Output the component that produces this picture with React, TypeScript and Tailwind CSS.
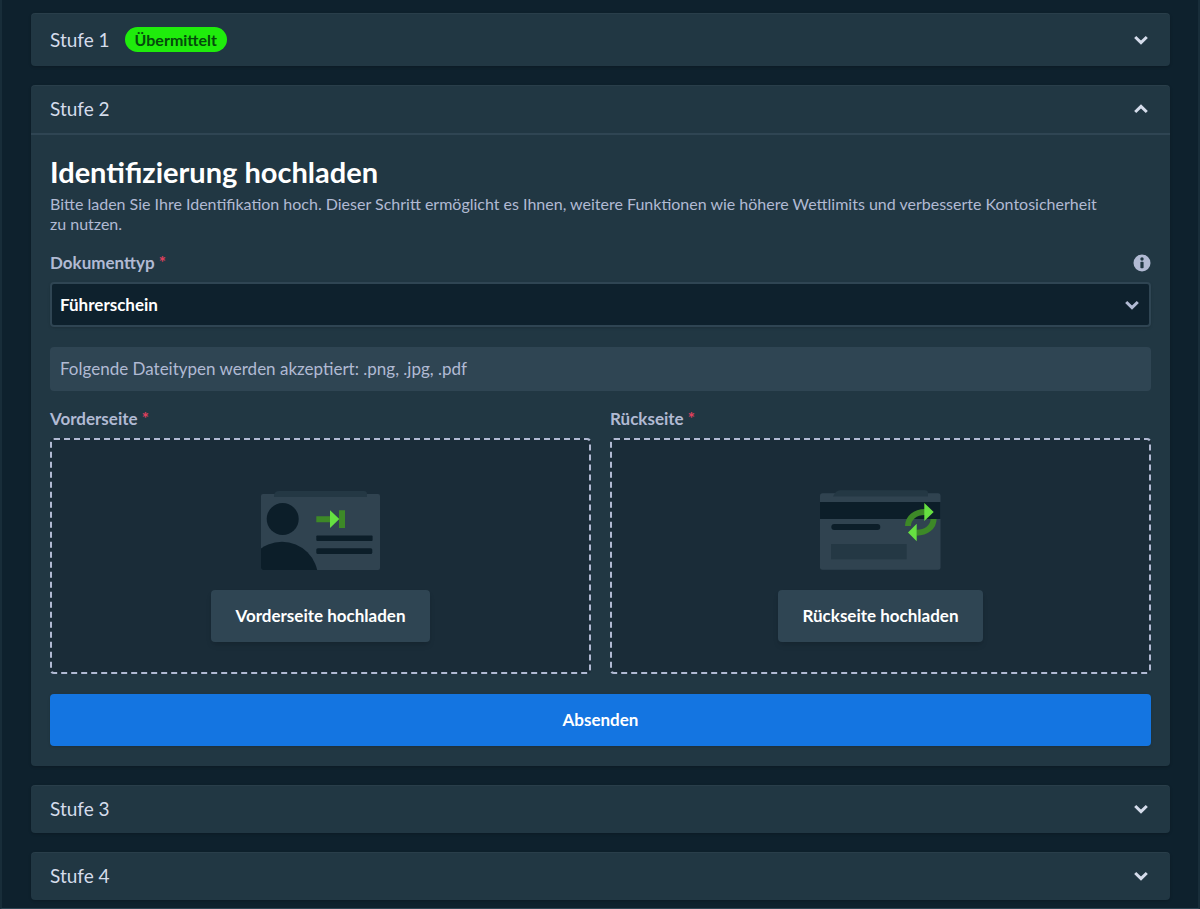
import { useState } from "react";
import type { ReactNode } from "react";

const bodyFont = "font-['Lato','Open_Sans',sans-serif]";

function Chevron({ up = false }: { up?: boolean }) {
  return (
    <svg
      viewBox="0 0 14 10"
      className="h-[10px] w-[14px] shrink-0"
      fill="none"
      stroke="currentColor"
      strokeWidth="3"
      aria-hidden="true"
    >
      <path d={up ? "M1.2 8 7 2.4 12.8 8" : "M1.2 2 7 7.6 12.8 2"} />
    </svg>
  );
}

function InfoIcon() {
  return (
    <svg viewBox="0 0 18 18" className="h-[18px] w-[18px]" aria-hidden="true">
      <circle cx="9" cy="9" r="8.5" fill="#b1bad3" />
      <circle cx="9" cy="5" r="1.7" fill="#213743" />
      <rect x="7.4" y="7.8" width="3.2" height="6.4" rx="0.8" fill="#213743" />
    </svg>
  );
}

// ID card, portrait side
function FrontIllustration() {
  return (
    <svg viewBox="0 0 121 100" className="h-[100px] w-[121px]" aria-hidden="true">
      <defs>
        <clipPath id="front-card">
          <rect x="1" y="24" width="119" height="76" rx="2" />
        </clipPath>
      </defs>
      <rect x="1" y="24" width="119" height="76" rx="2" fill="#304350" />
      <path d="M14 27v-2q1-4 5-4h85q3 0 3 3v3z" fill="#243844" />
      <g clipPath="url(#front-card)" fill="#0c1e29">
        <circle cx="22.7" cy="49" r="16" />
        <circle cx="22" cy="107.7" r="36" />
      </g>
      <rect x="56.3" y="65.5" width="56.3" height="5.5" rx="1" fill="#0c1e29" />
      <rect x="56.3" y="78.2" width="56" height="5.8" rx="1.5" fill="#0c1e29" />
      <path d="M56.3 46.2H71v6H56.3zM79 40.2h6V58h-6z" fill="#3d8927" />
      <path d="M70 40.2 79.3 49.1 70 58z" fill="#66e041" />
    </svg>
  );
}

// ID card, magnetic strip side
function BackIllustration() {
  return (
    <svg viewBox="0 0 121 100" className="h-[100px] w-[121px]" aria-hidden="true">
      <rect x="0" y="23.3" width="120.5" height="76.5" rx="2.5" fill="#304350" />
      <path d="M13 26.5q3-6.3 7-6.3h85q3 0 3 3v3.3z" fill="#243844" />
      <rect x="0" y="32" width="120.5" height="17" fill="#0c1e29" />
      <rect x="11.3" y="54" width="49" height="6" rx="3" fill="#0c1e29" />
      <rect x="11" y="74" width="75.7" height="15.3" fill="#243844" />
      <g fill="none" stroke="#3d8927" strokeWidth="6">
        <path d="M88 56C88 48 95 42 105 42" />
        <path d="M113.6 49C113.6 56.7 106.5 62.7 96.5 62.7" />
      </g>
      <path d="M104.3 33 113.7 42 104.3 51zM96.7 53.7 88 62.5 96.7 71.3z" fill="#66e041" />
    </svg>
  );
}

function Required() {
  return <span className="text-[#e0405e]">*</span>;
}

interface LevelProps {
  title: string;
  badge?: string;
  open: boolean;
  onToggle: () => void;
  children?: ReactNode;
}

function Level({ title, badge, open, onToggle, children }: LevelProps) {
  const expanded = open && !!children;

  return (
    <section className="rounded bg-[#213743] shadow-[0_1px_3px_rgba(0,0,0,0.2),inset_0_1px_0_rgba(255,255,255,0.04)]">
      <button
        type="button"
        aria-expanded={expanded}
        onClick={onToggle}
        className={`flex w-full items-center px-[19px] text-[19px] leading-6 text-[#d5dceb] ${
          badge ? "py-[14px]" : "py-3"
        } ${expanded ? "border-b-2 border-[#2f4553]" : ""}`}
      >
        <span>{title}</span>
        {badge && (
          <span className="ml-[15px] rounded-full bg-[#1fec0c] px-[10px] text-base leading-[25px] font-bold text-[#054a0c]">
            {badge}
          </span>
        )}
        <span className="mr-[3px] ml-auto">
          <Chevron up={expanded} />
        </span>
      </button>
      {expanded && children}
    </section>
  );
}

interface DropZoneProps {
  label: string;
  action: string;
  illustration: ReactNode;
}

function DropZone({ label, action, illustration }: DropZoneProps) {
  return (
    <div className="min-w-0 flex-1">
      <div className="text-[17px] leading-5 font-bold text-[#b1bad3]">
        {label} <Required />
      </div>
      <div className="mt-[9px] flex flex-col items-center rounded border-2 border-dashed border-[#b1bad3] bg-[#1a2c38] py-[30px]">
        {illustration}
        <button
          type="button"
          className="mt-5 h-[52px] rounded bg-[#2f4553] px-6 text-[17px] font-bold text-white shadow-md"
        >
          {action}
        </button>
      </div>
    </div>
  );
}

function IdentificationForm() {
  return (
    <form className="px-[19px] pt-[19px] pb-5" onSubmit={(e) => e.preventDefault()}>
      <h2 className="text-[29px] leading-9 font-bold text-white">Identifizierung hochladen</h2>
      <p className="mt-1 text-base leading-5 text-[#b1bad3]">
        Bitte laden Sie Ihre Identifikation hoch. Dieser Schritt ermöglicht es Ihnen, weitere
        Funktionen wie höhere Wettlimits und verbesserte Kontosicherheit zu&nbsp;nutzen.
      </p>

      <div className="mt-[19px] flex h-5 items-center justify-between">
        <label htmlFor="document-type" className="text-[17px] leading-5 font-bold text-[#b1bad3]">
          Dokumenttyp <Required />
        </label>
        <button type="button" aria-label="Info">
          <InfoIcon />
        </button>
      </div>
      <div className="relative mt-[9px]">
        <select
          id="document-type"
          className="block h-[45px] w-full appearance-none rounded border-2 border-[#2f4553] bg-[#0e212d] px-2 text-[17px] font-bold text-white shadow"
        >
          <option>Führerschein</option>
          <option>Reisepass</option>
          <option>Personalausweis</option>
        </select>
        <span className="pointer-events-none absolute inset-y-0 right-3 flex items-center text-[#b1bad3]">
          <Chevron />
        </span>
      </div>

      <p className="mt-5 rounded bg-[#2f4553] px-[10px] py-3 text-[17px] leading-5 text-[#b1bad3]">
        Folgende Dateitypen werden akzeptiert: .png, .jpg, .pdf
      </p>

      <div className="mt-[18px] flex gap-[19px]">
        <DropZone
          label="Vorderseite"
          action="Vorderseite hochladen"
          illustration={<FrontIllustration />}
        />
        <DropZone
          label="Rückseite"
          action="Rückseite hochladen"
          illustration={<BackIllustration />}
        />
      </div>

      <button
        type="submit"
        className="mt-5 h-[52px] w-full rounded bg-[#1475e1] text-[17px] font-bold text-white shadow"
      >
        Absenden
      </button>
    </form>
  );
}

export default function App() {
  const [openLevel, setOpenLevel] = useState(2);
  const toggle = (level: number) => setOpenLevel(openLevel === level ? 0 : level);

  return (
    <main
      className={`flex min-h-screen flex-col gap-[19px] border-x-2 border-b border-x-[#182d39] border-b-[#2f4553] bg-[#0e212d] pt-[13px] pr-7 pb-2 pl-[29px] ${bodyFont}`}
    >
      <Level
        title="Stufe 1"
        badge="Übermittelt"
        open={openLevel === 1}
        onToggle={() => toggle(1)}
      />
      <Level title="Stufe 2" open={openLevel === 2} onToggle={() => toggle(2)}>
        <IdentificationForm />
      </Level>
      <Level title="Stufe 3" open={openLevel === 3} onToggle={() => toggle(3)} />
      <Level title="Stufe 4" open={openLevel === 4} onToggle={() => toggle(4)} />
    </main>
  );
}
